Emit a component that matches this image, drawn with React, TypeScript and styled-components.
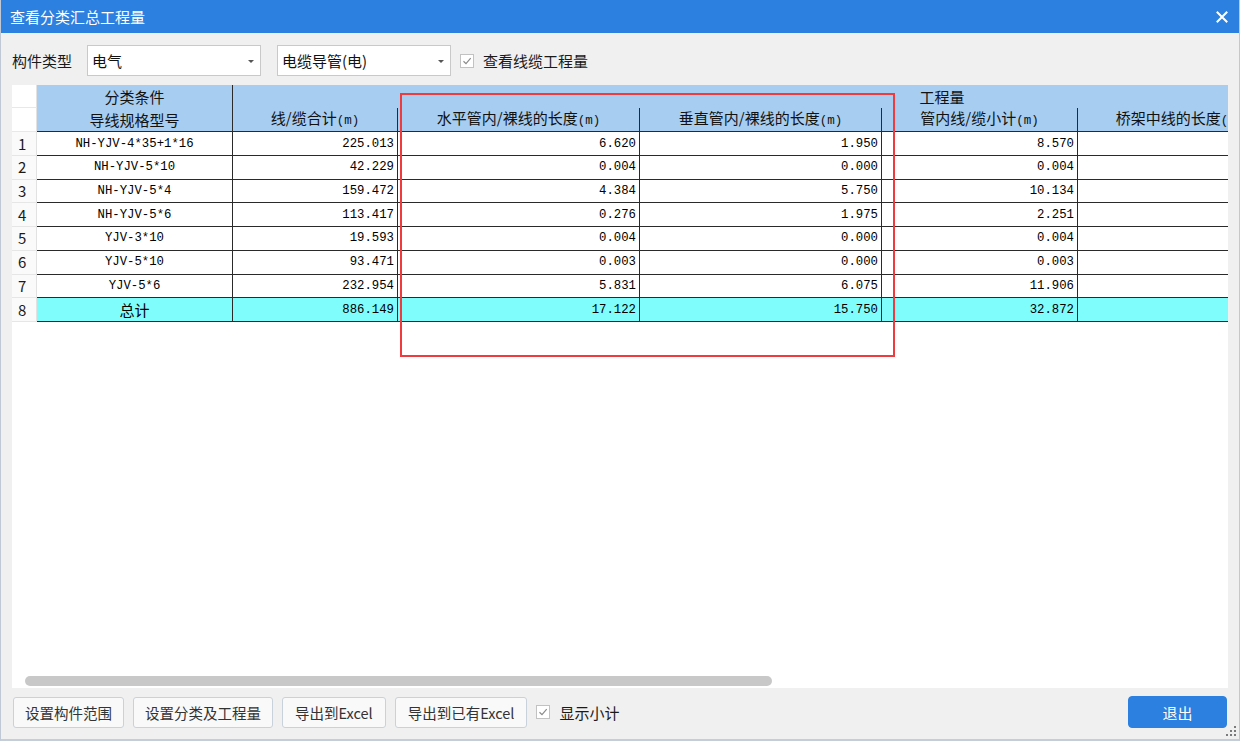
import React from 'react';
import styled, { createGlobalStyle } from 'styled-components';

const GlobalStyle = createGlobalStyle`
  html, body { margin: 0; padding: 0; background: #f0f0f0; }
  body { font-family: "Noto Sans CJK SC", "Noto Sans", sans-serif; color: #1a1a1a; }
  * { box-sizing: border-box; }
`;

const rows = [
  { spec: 'NH-YJV-4*35+1*16', total: '225.013', h: '6.620', v: '1.950', sub: '8.570' },
  { spec: 'NH-YJV-5*10', total: '42.229', h: '0.004', v: '0.000', sub: '0.004' },
  { spec: 'NH-YJV-5*4', total: '159.472', h: '4.384', v: '5.750', sub: '10.134' },
  { spec: 'NH-YJV-5*6', total: '113.417', h: '0.276', v: '1.975', sub: '2.251' },
  { spec: 'YJV-3*10', total: '19.593', h: '0.004', v: '0.000', sub: '0.004' },
  { spec: 'YJV-5*10', total: '93.471', h: '0.003', v: '0.000', sub: '0.003' },
  { spec: 'YJV-5*6', total: '232.954', h: '5.831', v: '6.075', sub: '11.906' },
];

// row number, spec, total, horizontal, vertical, subtotal, tray, tray subtotal
const colWidths = [25, 196, 165, 242, 242, 196, 204, 369];

const Window = styled.div`
  position: relative;
  width: 1240px;
  height: 741px;
  display: flex;
  flex-direction: column;
  background: #f0f0f0;
  border-left: 1px solid #bfc8d4;
  border-right: 1px solid #bfc8d4;
  border-bottom: 2px solid #c5cdd8;
  overflow: hidden;
`;

const TitleBar = styled.div`
  height: 33px;
  flex: none;
  display: flex;
  align-items: center;
  justify-content: space-between;
  padding: 0 11px 0 9px;
  background: #2c80e0;
  color: #fff;
  font-size: 15px;
`;

const CloseIcon = () => (
  <svg width="12" height="12" viewBox="0 0 12 12">
    <path d="M1.5 1.5 L10.5 10.5 M10.5 1.5 L1.5 10.5" stroke="#fff" strokeWidth="2" strokeLinecap="square" />
  </svg>
);

const Toolbar = styled.div`
  display: flex;
  align-items: center;
  height: 31px;
  margin-top: 12px;
  padding-left: 11px;
  font-size: 15px;
`;

const Label = styled.span`
  margin-right: 15px;
  color: #1a1a1a;
`;

const Select = styled.div<{ $gap?: number }>`
  position: relative;
  width: 174px;
  height: 31px;
  margin-right: ${(p) => p.$gap ?? 0}px;
  display: flex;
  align-items: center;
  padding-left: 4px;
  background: #fff;
  border: 1px solid #c9c9c9;
  font-size: 15px;
  color: #111;
  &:after {
    content: "";
    position: absolute;
    right: 6px;
    top: 14px;
    border-left: 3px solid transparent;
    border-right: 3px solid transparent;
    border-top: 3px solid #555;
  }
`;

const CheckWrap = styled.label`
  display: flex;
  align-items: center;
  gap: 9px;
  font-size: 15px;
  color: #1a1a1a;
`;

const CheckBox = styled.span`
  width: 14px;
  height: 14px;
  display: flex;
  align-items: center;
  justify-content: center;
  background: #fff;
  border: 1px solid #c2c2c2;
`;

const Check = ({ label }: { label: string }) => (
  <CheckWrap>
    <CheckBox>
      <svg width="10" height="10" viewBox="0 0 10 10">
        <path d="M1.5 5.2 L4 7.6 L8.7 2.2" fill="none" stroke="#8a8a8a" strokeWidth="1.2" />
      </svg>
    </CheckBox>
    {label}
  </CheckWrap>
);

const GridPanel = styled.div`
  position: relative;
  margin: 9px 11px 0 11px;
  height: 603px;
  flex: none;
  background: #fff;
  overflow: hidden;
`;

const Table = styled.table`
  width: 1639px;
  table-layout: fixed;
  border-collapse: separate;
  border-spacing: 0;
`;

const CornerCell = styled.th`
  background: #fff;
  border-right: 1px solid #e2e2e2;
  border-bottom: 1px solid #e8e8e8;
  padding: 0;
`;

const HeadCell = styled.th<{ $line?: boolean; $bottom?: boolean }>`
  height: 23.4px;
  padding: 0;
  background: #a7cdf0;
  border-right: ${(p) => (p.$line ? '1px solid #2a2a2a' : 'none')};
  border-bottom: ${(p) => (p.$bottom ? '1px solid #2a2a2a' : 'none')};
  font-weight: normal;
  font-size: 15px;
  line-height: 20px;
  color: #111;
  text-align: center;
  white-space: nowrap;
  overflow: hidden;
`;

const Unit = styled.span`
  font-family: "Liberation Mono", monospace;
  font-size: 12.5px;
`;

const NumCell = styled.td`
  height: 23.7px;
  padding: 0 0 0 6px;
  background: #fafafa;
  border-right: 1px solid #e2e2e2;
  border-bottom: 1px solid #e6e6e6;
  font-size: 15px;
  line-height: 20px;
  color: #1a1a1a;
`;

const Cell = styled.td<{ $total?: boolean; $center?: boolean; $cjk?: boolean }>`
  height: 23.7px;
  padding: ${(p) => (p.$center ? '0' : '0 3px 0 0')};
  background: ${(p) => (p.$total ? '#7ffdfd' : '#fff')};
  border-right: 1px solid #2a2a2a;
  border-bottom: 1px solid #2a2a2a;
  text-align: ${(p) => (p.$center ? 'center' : 'right')};
  font-family: ${(p) => (p.$cjk ? '"Noto Sans CJK SC", sans-serif' : '"Liberation Mono", monospace')};
  font-size: ${(p) => (p.$cjk ? '15px' : '12.3px')};
  line-height: 20px;
  color: #000;
  white-space: nowrap;
  overflow: hidden;
`;

const ScrollThumb = styled.div`
  position: absolute;
  left: 13px;
  bottom: 2px;
  width: 747px;
  height: 10px;
  border-radius: 5px;
  background: #c8c8c8;
`;

const Footer = styled.div`
  display: flex;
  align-items: center;
  height: 32px;
  margin-top: 8px;
  padding: 0 12px 0 12px;
  gap: 9px;
`;

const Button = styled.button`
  height: 31px;
  padding: 0 11px;
  background: #f9f9f9;
  border: 1px solid #c9d1da;
  border-radius: 3px;
  font-family: "Noto Sans CJK SC", "Noto Sans", sans-serif;
  font-size: 14.5px;
  color: #333;
`;

const WideButton = styled(Button)`
  padding: 0 12px;
`;

const PrimaryButton = styled(Button)`
  margin-left: auto;
  width: 99px;
  height: 32px;
  background: #2c80e0;
  border-color: #2c80e0;
  border-radius: 4px;
  color: #fff;
  font-size: 15px;
`;

const Annotation = styled.div`
  position: absolute;
  left: 399px;
  top: 93px;
  width: 495px;
  height: 264px;
  border: 2px solid #ef3b3d;
  pointer-events: none;
`;

const Grip = styled.svg`
  position: absolute;
  right: 2px;
  bottom: 2px;
`;

export default function App() {
  return (
    <>
      <GlobalStyle />
      <Window>
        <TitleBar>
          <span>查看分类汇总工程量</span>
          <CloseIcon />
        </TitleBar>

        <Toolbar>
          <Label>构件类型</Label>
          <Select $gap={16}>电气</Select>
          <Select $gap={9}>电缆导管(电)</Select>
          <Check label="查看线缆工程量" />
        </Toolbar>

        <GridPanel>
          <Table>
            <colgroup>
              {colWidths.map((w, i) => (
                <col key={i} style={{ width: w }} />
              ))}
            </colgroup>
            <thead>
              <tr>
                <CornerCell />
                <HeadCell $line>分类条件</HeadCell>
                <HeadCell colSpan={6}>工程量</HeadCell>
              </tr>
              <tr>
                <CornerCell />
                <HeadCell $line $bottom>导线规格型号</HeadCell>
                <HeadCell $line $bottom>线/缆合计<Unit>(m)</Unit></HeadCell>
                <HeadCell $line $bottom>水平管内/裸线的长度<Unit>(m)</Unit></HeadCell>
                <HeadCell $line $bottom>垂直管内/裸线的长度<Unit>(m)</Unit></HeadCell>
                <HeadCell $line $bottom>管内线/缆小计<Unit>(m)</Unit></HeadCell>
                <HeadCell $line $bottom>桥架中线的长度<Unit>(m)</Unit></HeadCell>
                <HeadCell $line $bottom>桥架中线/缆小计<Unit>(m)</Unit></HeadCell>
              </tr>
            </thead>
            <tbody>
              {rows.map((r, i) => (
                <tr key={r.spec}>
                  <NumCell>{i + 1}</NumCell>
                  <Cell $center>{r.spec}</Cell>
                  <Cell>{r.total}</Cell>
                  <Cell>{r.h}</Cell>
                  <Cell>{r.v}</Cell>
                  <Cell>{r.sub}</Cell>
                  <Cell />
                  <Cell />
                </tr>
              ))}
              <tr>
                <NumCell>8</NumCell>
                <Cell $total $center $cjk>总计</Cell>
                <Cell $total>886.149</Cell>
                <Cell $total>17.122</Cell>
                <Cell $total>15.750</Cell>
                <Cell $total>32.872</Cell>
                <Cell $total />
                <Cell $total />
              </tr>
            </tbody>
          </Table>
          <ScrollThumb />
        </GridPanel>

        <Footer>
          <Button>设置构件范围</Button>
          <Button>设置分类及工程量</Button>
          <WideButton>导出到Excel</WideButton>
          <WideButton>导出到已有Excel</WideButton>
          <Check label="显示小计" />
          <PrimaryButton>退出</PrimaryButton>
        </Footer>

        <Annotation />
        <Grip width="12" height="12" viewBox="0 0 12 12">
          <rect x="9" y="1" width="2" height="2" fill="#7a7a7a" />
          <rect x="5" y="5" width="2" height="2" fill="#7a7a7a" />
          <rect x="9" y="5" width="2" height="2" fill="#7a7a7a" />
          <rect x="1" y="9" width="2" height="2" fill="#7a7a7a" />
          <rect x="5" y="9" width="2" height="2" fill="#7a7a7a" />
          <rect x="9" y="9" width="2" height="2" fill="#7a7a7a" />
        </Grip>
      </Window>
    </>
  );
}
